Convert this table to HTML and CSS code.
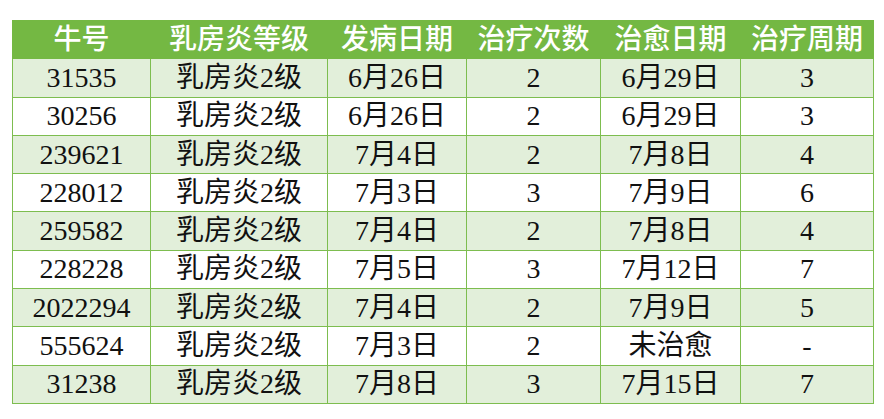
FILE: index.html
```html
<!DOCTYPE html>
<html lang="zh">
<head>
<meta charset="utf-8">
<link rel="stylesheet" href="styles.css">
</head>
<body>
<table class="grid">
  <colgroup>
    <col class="c1"><col class="c2"><col class="c3"><col class="c4"><col class="c5"><col class="c6">
  </colgroup>
  <thead>
    <tr><th>牛号</th><th>乳房炎等级</th><th>发病日期</th><th>治疗次数</th><th>治愈日期</th><th>治疗周期</th></tr>
  </thead>
  <tbody>
    <tr class="alt"><td>31535</td><td>乳房炎2级</td><td>6月26日</td><td>2</td><td>6月29日</td><td>3</td></tr>
    <tr><td>30256</td><td>乳房炎2级</td><td>6月26日</td><td>2</td><td>6月29日</td><td>3</td></tr>
    <tr class="alt"><td>239621</td><td>乳房炎2级</td><td>7月4日</td><td>2</td><td>7月8日</td><td>4</td></tr>
    <tr><td>228012</td><td>乳房炎2级</td><td>7月3日</td><td>3</td><td>7月9日</td><td>6</td></tr>
    <tr class="alt"><td>259582</td><td>乳房炎2级</td><td>7月4日</td><td>2</td><td>7月8日</td><td>4</td></tr>
    <tr><td>228228</td><td>乳房炎2级</td><td>7月5日</td><td>3</td><td>7月12日</td><td>7</td></tr>
    <tr class="alt"><td>2022294</td><td>乳房炎2级</td><td>7月4日</td><td>2</td><td>7月9日</td><td>5</td></tr>
    <tr><td>555624</td><td>乳房炎2级</td><td>7月3日</td><td>2</td><td>未治愈</td><td>-</td></tr>
    <tr class="alt"><td>31238</td><td>乳房炎2级</td><td>7月8日</td><td>3</td><td>7月15日</td><td>7</td></tr>
  </tbody>
</table>
</body>
</html>
```
FILE: styles.css
```css
html, body {
  margin: 0;
  padding: 0;
  background: #ffffff;
}
body {
  padding: 20px 0 0 12px;
  font-family: "Liberation Serif", "Noto Sans CJK SC", serif;
}
.grid {
  border-collapse: collapse;
  table-layout: fixed;
  width: 861px;
}
.c1 { width: 138px; }
.c2 { width: 177px; }
.c3 { width: 139px; }
.c4 { width: 134px; }
.c5 { width: 140px; }
.c6 { width: 133px; }
.grid th, .grid td {
  height: 37.3px;
  padding: 0;
  text-align: center;
  vertical-align: middle;
  font-size: 28px;
  line-height: 1;
  white-space: nowrap;
}
.grid th {
  background: #74b843;
  color: #ffffff;
  font-weight: 500;
  font-family: "Liberation Serif", "Noto Sans CJK SC", serif;
  border: 1px solid #74b843;
}
.grid td {
  color: #111111;
  border: 1px solid #7dbd4f;
}
.grid tr.alt td {
  background: #e2efda;
}
```
